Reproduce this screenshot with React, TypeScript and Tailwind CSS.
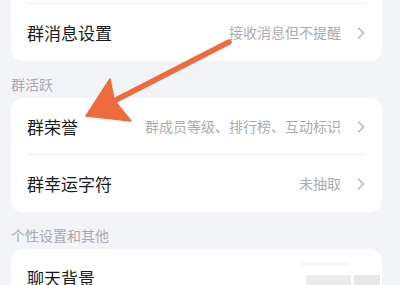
import { ReactNode } from 'react'

const Chevron = () => (
    <svg width="8" height="12" viewBox="0 0 8 12" className="ml-[16px] shrink-0">
        <polyline
            points="1.5,1 6.5,6 1.5,11"
            fill="none"
            stroke="#b4b4b8"
            strokeWidth="1.4"
            strokeLinecap="round"
            strokeLinejoin="round"
        />
    </svg>
)

type RowProps = {
    title: string
    value?: string
    divider?: boolean
    right?: ReactNode
}

const Row = ({ title, value, divider, right }: RowProps) => (
    <div className="relative flex h-[57px] items-center pl-4 pr-[17px]">
        <span className="flex-1 text-[17px] text-[#1b1b1d]">{title}</span>
        {right ?? (
            <>
                {value && (
                    <span className="text-[14px] text-[#ababaf]">{value}</span>
                )}
                <Chevron />
            </>
        )}
        {divider && (
            <div className="absolute bottom-0 left-4 right-4 h-px bg-[#ededf0]" />
        )}
    </div>
)

const SectionLabel = ({ children }: { children: ReactNode }) => (
    <div className="flex h-[37px] items-center pl-[11px] pt-[10px] text-[14px] text-[#a9a9ae]">
        {children}
    </div>
)

const Card = ({ children, className = '' }: { children: ReactNode; className?: string }) => (
    <div className={`ml-[11px] mr-[18px] overflow-hidden bg-white ${className}`}>
        {children}
    </div>
)

const Arrow = () => (
    <svg
        className="pointer-events-none absolute left-0 top-0"
        width="400"
        height="285"
        viewBox="0 0 400 285"
    >
        <line
            x1="229"
            y1="42"
            x2="112"
            y2="102"
            stroke="#ef6a3c"
            strokeWidth="5.5"
            strokeLinecap="round"
        />
        <polygon
            points="86,116 110,79 114,100 131,121"
            fill="#ef6a3c"
            stroke="#ef6a3c"
            strokeWidth="1.5"
            strokeLinejoin="round"
        />
    </svg>
)

const App = () => {
    return (
        <div
            className="relative h-[285px] w-[400px] overflow-hidden bg-[#f3f4f8]"
            style={{ fontFamily: '"Noto Sans CJK SC", "Noto Sans", sans-serif' }}
        >
            <Card className="rounded-b-xl">
                <div className="relative h-[4px]">
                    <div className="absolute bottom-0 left-4 right-4 h-px bg-[#ededf0]" />
                </div>
                <Row title="群消息设置" value="接收消息但不提醒" />
            </Card>

            <SectionLabel>群活跃</SectionLabel>
            <Card className="rounded-xl">
                <Row title="群荣誉" value="群成员等级、排行榜、互动标识" divider />
                <Row title="群幸运字符" value="未抽取" />
            </Card>

            <SectionLabel>个性设置和其他</SectionLabel>
            <Card className="rounded-xl">
                <Row
                    title="聊天背景"
                    right={
                        <div className="-mr-[15px] mt-[-4px] flex flex-col items-end gap-[10px]">
                            <div className="mr-[30px] h-[2px] w-[50px] bg-[#f2f2f4] blur-[1px]" />
                            <div className="flex gap-[3px] blur-[0.6px]">
                                <div className="h-[13px] w-[45px] bg-[#ececee]" />
                                <div className="h-[13px] w-[26px] bg-[#e8e8ea]" />
                            </div>
                        </div>
                    }
                />
            </Card>
            <Arrow />
        </div>
    )
}

export default App
